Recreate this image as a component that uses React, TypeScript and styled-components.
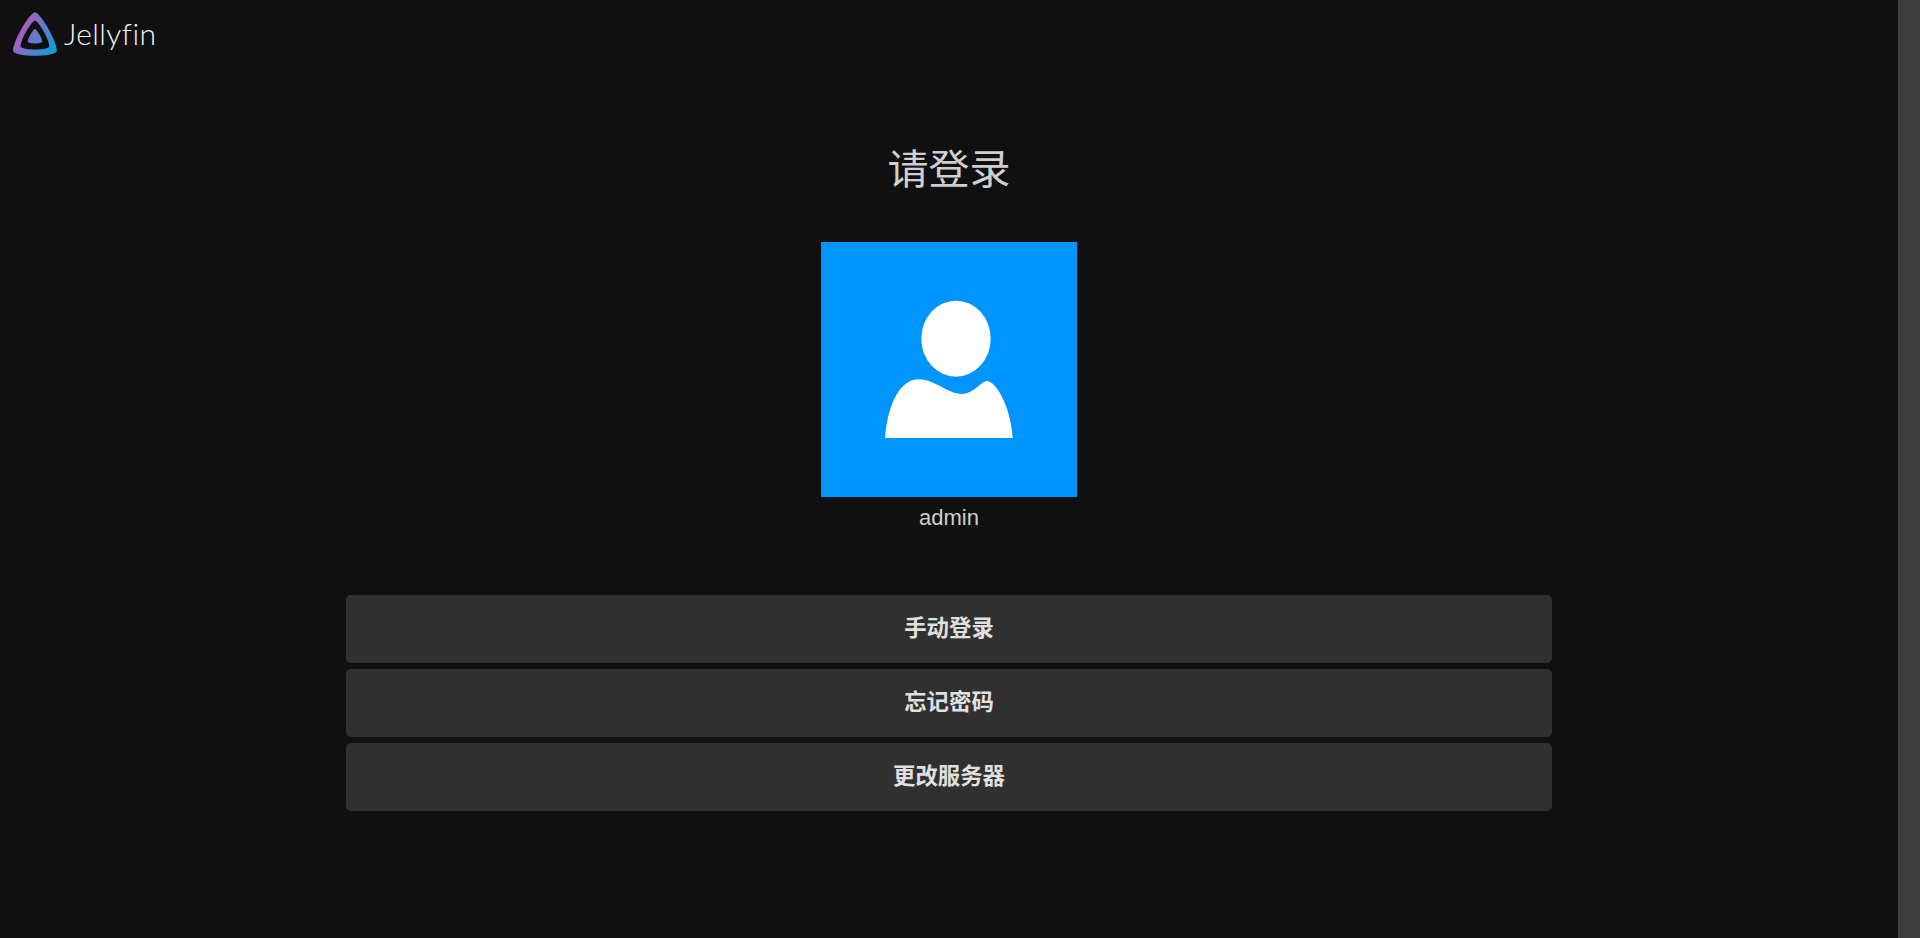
import { createGlobalStyle } from 'styled-components';
import styled from 'styled-components';

const GlobalStyle = createGlobalStyle`
  html, body {
    margin: 0;
    height: 100%;
    overflow: hidden;
    background: #101010;
  }
  #root {
    height: 100%;
  }
`;

const Page = styled.div`
  display: flex;
  height: 100%;
  font-family: "Liberation Sans", "Noto Sans CJK SC", sans-serif;
`;

const Main = styled.main`
  flex: 1;
  min-width: 0;
  display: flex;
  flex-direction: column;
`;

const Scrollbar = styled.div`
  width: 22px;
  background: #3c3c3c;
`;

const Header = styled.header`
  display: flex;
  align-items: center;
  gap: 1px;
  height: 68px;
  padding-left: 7px;
`;

const Brand = styled.span`
  margin-top: -3px;
  font-family: Lato, sans-serif;
  font-weight: 300;
  font-size: 30px;
  letter-spacing: 0.4px;
  font-variant-ligatures: none;
  color: #f2f2f2;
`;

const Title = styled.h1`
  margin: 0;
  padding-top: 73px;
  text-align: center;
  font-size: 41px;
  line-height: 58px;
  font-weight: 400;
  color: #cfcfcf;
`;

const UserCard = styled.div`
  margin-top: 43px;
  display: flex;
  flex-direction: column;
  align-items: center;
`;

const Avatar = styled.div`
  width: 256px;
  height: 255px;
  background: #0094ff;
`;

const UserName = styled.div`
  margin-top: 8px;
  font-size: 22px;
  line-height: 26px;
  color: #cfcfcf;
`;

const Actions = styled.div`
  width: 1206px;
  margin: 64px auto 0;
  display: flex;
  flex-direction: column;
  gap: 6px;
`;

const ActionButton = styled.button`
  height: 68px;
  padding: 0 0 6px;
  border: 0;
  border-radius: 5px;
  background: #303030;
  color: #e0e0e0;
  font-family: inherit;
  font-size: 22.4px;
  font-weight: 700;
`;

const JellyfinLogo = () => (
  <svg width="56" height="56" viewBox="0 0 512 512">
    <defs>
      <linearGradient id="jf" gradientUnits="userSpaceOnUse" x1="126.15" y1="219.32" x2="457.68" y2="410.73">
        <stop offset="0" stopColor="#aa5cc3" />
        <stop offset="1" stopColor="#00a4dc" />
      </linearGradient>
    </defs>
    <path
      fill="url(#jf)"
      d="M190.56 329.07c8.63 17.3 122.4 17.12 130.93 0 8.52-17.1-47.9-119.78-65.46-119.8-17.57 0-74.1 102.5-65.47 119.8z"
    />
    <path
      fill="url(#jf)"
      d="M58.75 417.03c25.97 52.15 368.86 51.55 394.55 0S308.93 56.08 256.03 56.08c-52.92 0-223.25 308.8-197.28 360.95zm68.04-45.25c-17.02-34.17 94.6-236.5 129.26-236.5 34.67 0 146.1 202.7 129.26 236.5-16.83 33.8-241.5 34.17-258.52 0z"
    />
  </svg>
);

const UserIcon = () => (
  <svg width="256" height="255" viewBox="0 0 256 255" style={{ display: 'block' }}>
    <ellipse cx="135" cy="96.7" rx="34.7" ry="38" fill="#fff" />
    <path
      fill="#fff"
      d="M64 196C67 160 80 137 98 137.3C115 138 127 152 141 152C152 152 161 139 165.7 139C175 139 190 165 191.7 196Z"
    />
  </svg>
);

const actions = ['手动登录', '忘记密码', '更改服务器'];

const App = () => {
  return (
    <Page>
      <GlobalStyle />
      <Main>
        <Header>
          <JellyfinLogo />
          <Brand>Jellyfin</Brand>
        </Header>
        <Title>请登录</Title>
        <UserCard>
          <Avatar>
            <UserIcon />
          </Avatar>
          <UserName>admin</UserName>
        </UserCard>
        <Actions>
          {actions.map((label) => (
            <ActionButton key={label}>{label}</ActionButton>
          ))}
        </Actions>
      </Main>
      <Scrollbar />
    </Page>
  );
};

export default App;
